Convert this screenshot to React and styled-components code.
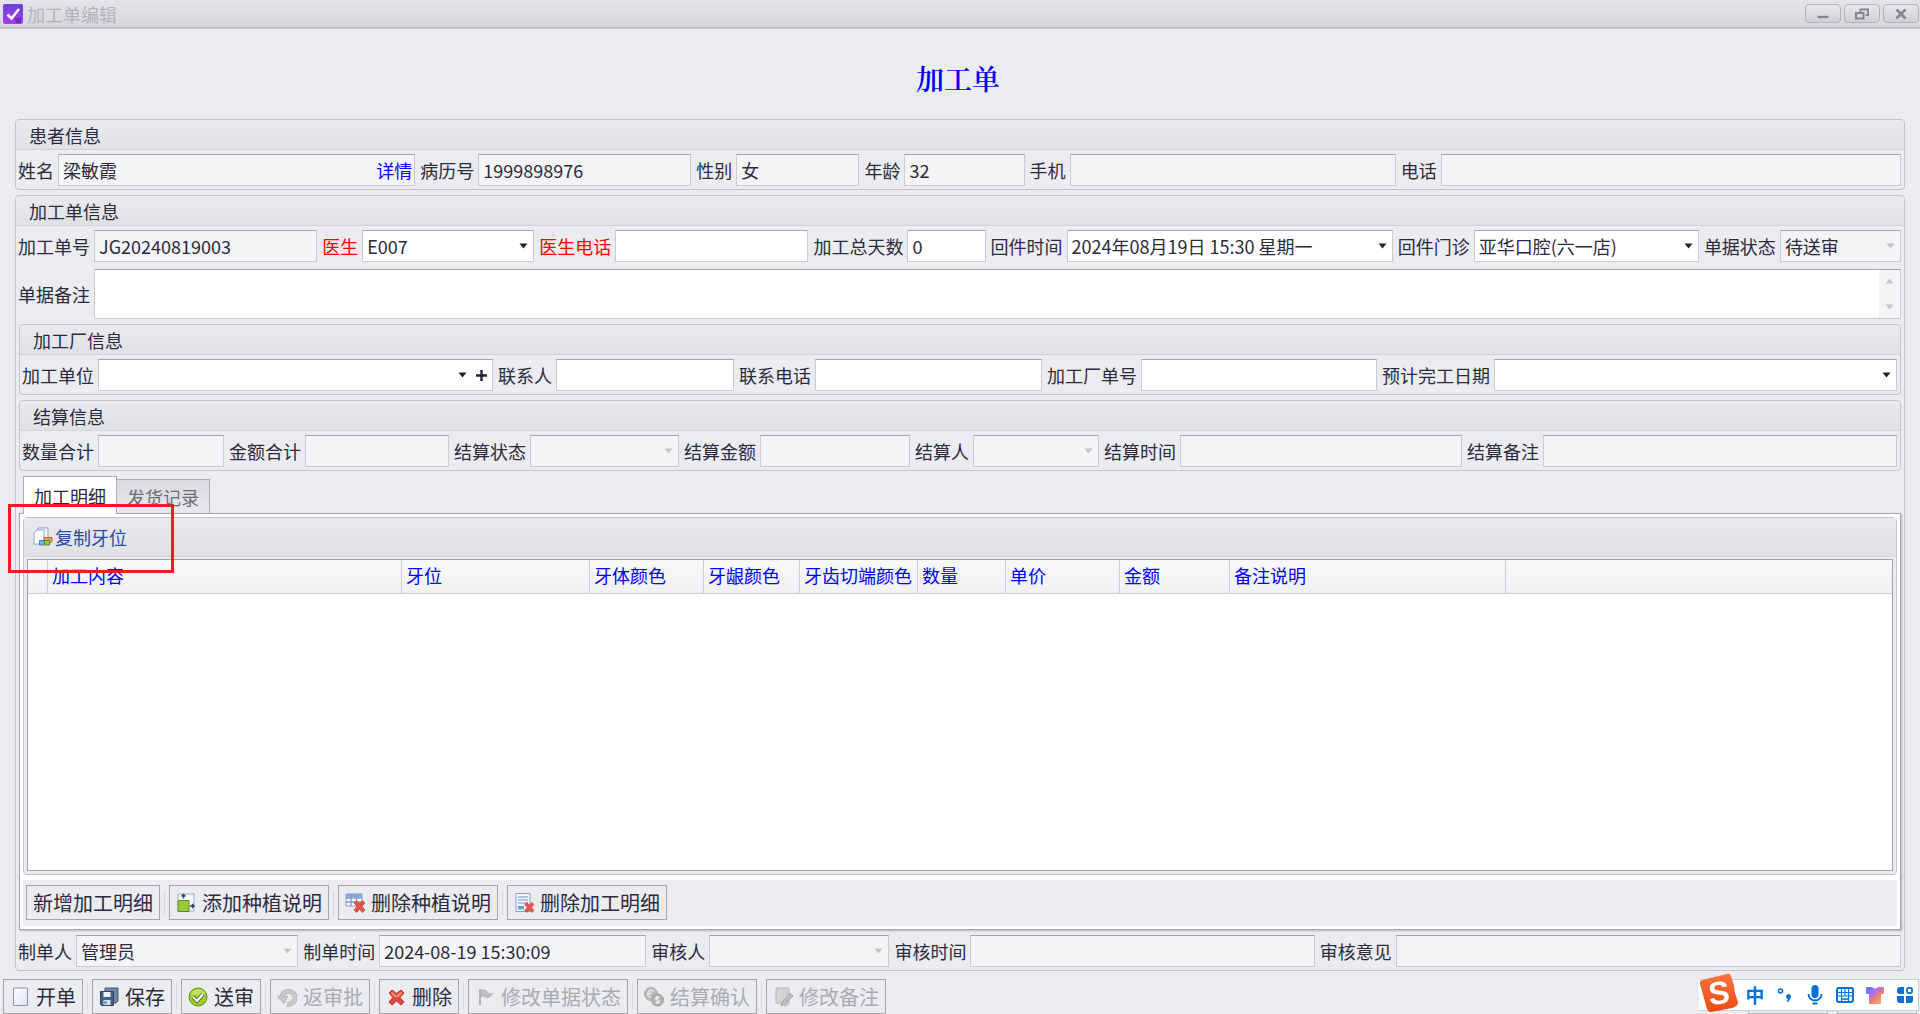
import { useId } from "react"
import styled, { createGlobalStyle, css } from "styled-components"

const GlobalStyle = createGlobalStyle`
  * {
    box-sizing: border-box;
  }
  body {
    margin: 0;
    background: #ebecef;
    color: #2b2b3f;
    font-size: 18px;
    line-height: 24px;
  }
  body, button, input, select, textarea {
    font-family: "Noto Sans CJK SC", "Open Sans", sans-serif;
  }
`
const Page = styled.div`
  display: flex;
  flex-direction: column;
  min-height: 100vh;
`
const TitleBar = styled.header`
  display: flex;
  align-items: center;
  gap: 4px;
  height: 29px;
  padding: 0 1px 0 3px;
  color: #b2b3bd;
  background: linear-gradient(#e3e4e8, #d6d7dc);
  border-bottom: 2px solid #c0c0ca;
`
const TitleText = styled.span`
  flex: 1;
`
const WindowButtons = styled.div`
  display: flex;
  gap: 3px;
`
const WindowButton = styled.button`
  display: flex;
  align-items: center;
  justify-content: center;
  width: 36px;
  height: 19px;
  padding: 0;
  background: linear-gradient(#e6e7ea, #d0d1d7);
  border: 1px solid #b2b3bc;
  border-radius: 4px;
`
const Heading = styled.h1`
  margin: 0;
  padding: 33px 4px 25px 0;
  color: #0000ff;
  font-family: "Noto Serif CJK SC", "Noto Sans CJK SC", serif;
  font-size: 28px;
  font-weight: 600;
  line-height: 32px;
  text-align: center;
`
const Form = styled.main`
  display: flex;
  flex-direction: column;
  flex: 1;
  gap: 5px;
  padding: 0 15px;
`
const Group = styled.section`
  display: flex;
  flex-direction: column;
  flex: ${props => (props.$fill ? "1" : "none")};
  border: 1px solid #c3c4cb;
  border-radius: 4px;
`
const GroupTitle = styled.h2`
  margin: 0;
  padding: 3px 13px 2px;
  font-size: 18px;
  font-weight: 400;
  line-height: 24px;
  background: linear-gradient(#e9eaed, #e0e1e5);
  border-bottom: 1px solid #d3d4d9;
  border-radius: 3px 3px 0 0;
`
const Row = styled.div`
  display: flex;
  padding: ${props => (props.$last ? "5px 3px 3px 0" : "4px 3px 3px 0")};
`
const Nested = styled.div`
  display: flex;
  flex-direction: column;
  flex: 1;
  gap: 5px;
  padding: 2px 3px 0;
`
const FieldItem = styled.div`
  display: flex;
  align-items: center;
  flex: ${props => props.$grow} 1 0;
  min-width: 0;
  &:first-child > label {
    padding-left: 2px;
  }
`
const FieldLabel = styled.label`
  flex: none;
  padding: 0 4px 0 5px;
  color: ${props => (props.$required ? "#ff0000" : "inherit")};
  white-space: nowrap;
`
const FieldBox = styled.div`
  display: flex;
  align-items: center;
  flex: 1;
  min-width: 0;
  height: ${props => (props.$tall ? "50px" : "32px")};
  color: ${props => (props.$locked ? "#c3c4ca" : "#222236")};
  background: ${props => (props.$locked ? "#f4f4f6" : "#fff")};
  border: 1px solid #cbccd3;
  border-top-color: #a3a4ae;
`
const controlStyle = css`
  flex: 1;
  min-width: 0;
  height: 100%;
  padding: 0 4px;
  color: #2b2b3f;
  font-size: 18px;
  line-height: 24px;
  background: transparent;
  border: 0;
  border-radius: 0;
  outline: none;
  opacity: 1;
`
const TextInput = styled.input`
  ${controlStyle}
`
const SelectInput = styled.select`
  ${controlStyle}
  appearance: none;
`
const NoteInput = styled.textarea`
  ${controlStyle}
  resize: none;
  overflow: hidden;
`
const ArrowIcon = styled.svg`
  flex: none;
  width: 9px;
  height: 6px;
  margin-right: 5px;
  fill: currentColor;
  pointer-events: none;
`
const AddButton = styled.button`
  display: flex;
  flex: none;
  padding: 0;
  margin: 0 5px 0 4px;
  background: none;
  border: 0;
`
const DetailLink = styled.a`
  flex: none;
  padding-right: 2px;
  color: #0000ff;
  text-decoration: none;
`
const ScrollTrack = styled.div`
  display: flex;
  flex-direction: column;
  align-items: center;
  justify-content: space-between;
  width: 21px;
  height: 100%;
  padding: 8px 0 8px 5px;
  color: #c8c9cf;
  background: #f4f4f6;
`
const TabArea = styled.div`
  display: flex;
  flex-direction: column;
  flex: 1;
`
const TabList = styled.div`
  display: flex;
  align-items: flex-end;
  padding-left: 4px;
`
const Tab = styled.button`
  position: relative;
  z-index: ${props => (props.$active ? 1 : 0)};
  height: ${props => (props.$active ? "38px" : "34px")};
  margin-bottom: ${props => (props.$active ? "-1px" : "0")};
  padding: 0 10px;
  color: ${props => (props.$active ? "#2b2b3f" : "#6c6c7a")};
  font-size: 18px;
  line-height: 24px;
  background: ${props => (props.$active ? "#fff" : "linear-gradient(#d9dade, #e8e9ec)")};
  border: 1px solid #acadb6;
  border-bottom: 0;
  & + & {
    border-left: 0;
  }
`
const Pane = styled.div`
  position: relative;
  display: flex;
  flex-direction: column;
  flex: 1;
  padding: 3px;
  background: #fff;
  border: 1px solid #a3a4ae;
  box-shadow: 1px 1px 2px #b4b5bc;
`
const GridPanel = styled.div`
  display: flex;
  flex-direction: column;
  flex: 1;
  padding: 0 3px 3px;
  background: #ebecef;
  border: 1px solid #c3c4cb;
  border-radius: 4px;
`
const PanelBar = styled.div`
  margin: 0 -3px 2px;
  padding: 4px 9px;
  background: linear-gradient(#e8e9ec, #e0e1e5);
  border-bottom: 1px solid #d3d4d9;
`
const CopyButton = styled.button`
  display: flex;
  align-items: center;
  gap: 2px;
  height: 30px;
  padding: 0;
  color: #2a4a9f;
  font-size: 18px;
  line-height: 24px;
  background: none;
  border: 0;
`
const GridBox = styled.div`
  flex: 1;
  background: #fff;
  border: 1px solid #a3a4ae;
`
const DetailTable = styled.table`
  width: 100%;
  table-layout: fixed;
  border-collapse: separate;
  border-spacing: 0;
`
const HeadCell = styled.th`
  width: ${props => (props.$width ? `${props.$width}px` : "auto")};
  height: 34px;
  padding: 0 0 3px 4px;
  color: #0000ff;
  font-weight: 400;
  text-align: left;
  white-space: nowrap;
  background: linear-gradient(#f8f8f9, #f0f1f3);
  border-right: 1px solid #cdced4;
  border-bottom: 1px solid #cdced4;
  &:last-child {
    border-right: 0;
  }
`
const Toolbar = styled.div`
  display: flex;
  align-items: center;
  padding: ${props => (props.$bottom ? "0 3px" : "5px 3px 6px")};
  margin-top: ${props => (props.$bottom ? "8px" : "5px")};
  background: #ebecef;
`
const ToolButton = styled.button`
  display: flex;
  align-items: center;
  gap: 6px;
  height: 35px;
  padding: 0 6px;
  color: #2b2b3f;
  font-size: 20px;
  line-height: 24px;
  white-space: nowrap;
  background: #ebecef;
  border: 1px solid #a6a6a8;
  &:disabled {
    color: #a9aab5;
  }
`
const Separator = styled.span`
  width: 1px;
  height: 24px;
  margin: 0 4px;
  background: #d5d6da;
`
const Spacer = styled.span`
  flex: 1;
`
const CoveredButton = styled.span`
  width: 80px;
  height: 35px;
  margin-left: 9px;
  border: 1px solid #b4b5ba;
`
const HighlightBox = styled.div`
  position: absolute;
  z-index: 2;
  top: -10px;
  left: -12px;
  width: 166px;
  height: 69px;
  border: 3px solid #f01c24;
  pointer-events: none;
`
const ImeBar = styled.div`
  position: fixed;
  right: 1px;
  bottom: 3px;
  display: flex;
  align-items: center;
  gap: 10px;
  height: 32px;
  padding-right: 3px;
  background: #fff;
  border: 1px solid #c2d3e8;
  border-left: 0;
`
const ImeLogo = styled.svg`
  width: 40px;
  height: 40px;
  margin: 0 -4px 4px 0;
  overflow: visible;
`
const ImeButton = styled.button`
  display: flex;
  align-items: center;
  justify-content: center;
  width: 20px;
  padding: 0;
  color: #0071dc;
  font-size: 19px;
  font-weight: 700;
  line-height: 24px;
  background: none;
  border: 0;
`

function Arrow({ up }) {
  return (
    <ArrowIcon viewBox="0 0 9 6">
      <path d={up ? "M.5 5.500h8L4.500 .5z" : "M.5 .5h8L4.500 5.500z"} />
    </ArrowIcon>
  )
}

function Field({ label, grow, value = "", locked, required, select, children }) {
  const id = useId()
  return (
    <FieldItem $grow={grow}>
      <FieldLabel htmlFor={id} $required={required}>{label}</FieldLabel>
      <FieldBox $locked={locked}>
        {select ? (
          <>
            <SelectInput id={id} defaultValue={value} disabled={locked}>
              <option>{value}</option>
            </SelectInput>
            <Arrow />
          </>
        ) : (
          <TextInput id={id} defaultValue={value} readOnly={locked} />
        )}
        {children}
      </FieldBox>
    </FieldItem>
  )
}

function AppIcon() {
  return (
    <svg width="20" height="20" viewBox="0 0 20 20">
      <defs>
        <linearGradient id="appFill" x1="0" y1="0" x2="0" y2="1">
          <stop offset="0" stopColor="#6b3fd6" />
          <stop offset="1" stopColor="#a63df0" />
        </linearGradient>
      </defs>
      <rect width="20" height="20" rx="2" fill="url(#appFill)" />
      <path d="M12 14l6-1v6h-5z" fill="#7029c9" />
      <path d="M4.500 10.500l4 4L16 5" fill="none" stroke="#fff" strokeWidth="2.500" />
    </svg>
  )
}

function CopyIcon() {
  return (
    <svg width="20" height="20" viewBox="0 0 20 20">
      <path d="M5 1h10v13H5z" fill="#f4f7fd" stroke="#8fa3d3" />
      <path d="M1 6l3-3h7v14H1z" fill="#fff" stroke="#8fa3d3" />
      <path d="M11 10.500h8v4l-2 1.500h-6z" fill="#f0a04a" stroke="#a9561c" strokeWidth=".8" />
      <path d="M6.500 13.500h5V18h-5z" fill="#6cb8ea" stroke="#2c6aa8" strokeWidth=".8" />
      <path d="M11.500 13.500h5V18h-5z" fill="#9ac73c" stroke="#4d7a12" strokeWidth=".8" />
    </svg>
  )
}

function AddPlantIcon() {
  return (
    <svg width="20" height="20" viewBox="0 0 20 20">
      <path d="M2 1h16v17H2z" fill="#f7f9fd" stroke="#93a5cf" />
      <path d="M2 7.500h11v11H2z" fill="#9cc83f" stroke="#5e8d1c" />
      <path d="M7.500 1.500v4M5.500 3.500l2-2 2 2M14 13h4M16 11l2 2-2 2" fill="none" stroke="#33415f" strokeWidth="1.400" />
    </svg>
  )
}

function RemoveMark() {
  return (
    <path d="M9 10l2.500-2.500L14.500 10.500l3-3L20 10l-3 3.500 3 3.500-2.500 2.500-3-3-3 3L9 17l3-3.500z" fill="#e2574a" stroke="#b8332b" strokeWidth=".6" />
  )
}

function DeletePlantIcon() {
  return (
    <svg width="20" height="20" viewBox="0 0 20 20">
      <path d="M1 1h16v12H1z" fill="#fff" stroke="#7f98cf" />
      <path d="M1 1h16v3H1z" fill="#8aa7dc" />
      <path d="M1 5h16M1 9h16M6 1v12M11.500 1v12" stroke="#7f98cf" strokeWidth="1.300" />
      <RemoveMark />
    </svg>
  )
}

function DeleteDetailIcon() {
  return (
    <svg width="20" height="20" viewBox="0 0 20 20">
      <path d="M2 .5h14v18H2z" fill="#f2f5fc" stroke="#8f9fd0" />
      <path d="M4 4h10M4 7h10M4 10h10" stroke="#9eb2dc" strokeWidth="1.300" />
      <path d="M4 13h6v3.500H4z" fill="#58a9df" />
      <g transform="translate(3 3) scale(.85)">
        <RemoveMark />
      </g>
    </svg>
  )
}

function NewIcon() {
  return (
    <svg width="20" height="20" viewBox="0 0 20 20">
      <defs>
        <linearGradient id="paper" x1="0" y1="0" x2="1" y2="1">
          <stop offset="0" stopColor="#fff" />
          <stop offset="1" stopColor="#dbe4f6" />
        </linearGradient>
      </defs>
      <path d="M3.500 1h14v17.500h-14z" fill="url(#paper)" stroke="#7f8fc4" />
    </svg>
  )
}

function SaveIcon() {
  return (
    <svg width="20" height="20" viewBox="0 0 20 20">
      <path d="M6 1h13v13l-2 2H6z" fill="#7085a4" stroke="#4a5872" />
      <path d="M1.500 4.500h13v14h-12l-1-1z" fill="#465f88" stroke="#33425e" />
      <path d="M4.500 5h7v5h-7z" fill="#eef3fa" />
      <path d="M4.500 13h7v5h-7z" fill="#dce4ef" />
      <path d="M5 14h3v3H5z" fill="#5ab3e6" />
    </svg>
  )
}

function ApproveIcon() {
  return (
    <svg width="20" height="20" viewBox="0 0 20 20">
      <circle cx="10" cy="10" r="9" fill="#9bcd2f" stroke="#5d8e16" />
      <path d="M3 7a7.500 7.500 0 0 1 14 0q-7 3-14 0z" fill="#bfe263" />
      <path d="M5 10l4 4 6-7" fill="none" stroke="#4c7415" strokeWidth="4" />
      <path d="M5 10l4 4 6-7" fill="none" stroke="#fff" strokeWidth="2.200" />
    </svg>
  )
}

function ReturnIcon() {
  return (
    <svg width="20" height="20" viewBox="0 0 20 20">
      <path d="M5 11a6.500 6.500 0 1 1 5 6" fill="none" stroke="#b0b0b0" strokeWidth="5" />
      <path d="M5 11a6.500 6.500 0 1 1 5 6" fill="none" stroke="#c9c9c9" strokeWidth="3.400" />
      <path d="M0 9h11l-4 8z" fill="#c4c4c4" stroke="#b0b0b0" strokeWidth=".6" />
    </svg>
  )
}

function DeleteIcon() {
  return (
    <svg width="20" height="20" viewBox="0 0 20 20">
      <path d="M3 6l3-3 4.500 3.500L15 3l3 3-4 4.500 4 4.500-3 3-4.500-4L6 18l-3-3 4-4.500z" fill="#de4c3e" stroke="#b52f27" strokeLinejoin="round" />
      <path d="M4.500 6L6 4.500l4.500 4 4.500-4L16.500 6l-4 4h-4z" fill="#f08a78" />
    </svg>
  )
}

function FlagIcon() {
  return (
    <svg width="20" height="20" viewBox="0 0 20 20">
      <path d="M4 2h2v16H4z" fill="#b5b5b5" />
      <path d="M6 3q4-1 6 1v2q3 1 6 0l-3 4q-4 2-6-1l-3 1z" fill="#bfbfbf" stroke="#b0b0b0" strokeWidth=".6" />
    </svg>
  )
}

function CoinsIcon() {
  return (
    <svg width="20" height="20" viewBox="0 0 20 20">
      <circle cx="7" cy="7" r="6.500" fill="#bdbdbd" stroke="#a9a9a9" />
      <path d="M10 4.500a3.500 3.500 0 1 0 0 5M3 6.500h5" fill="none" stroke="#e4e4e4" strokeWidth="1.300" />
      <circle cx="13.500" cy="13" r="6" fill="#b3b3b3" stroke="#9e9e9e" />
      <path d="M15.500 11q-2-1.500-3.500-.3t1.500 2.300 1.500 2.300-3.500-.3M13.500 9v8" fill="none" stroke="#eee" strokeWidth="1.200" />
    </svg>
  )
}

function EditNoteIcon() {
  return (
    <svg width="20" height="20" viewBox="0 0 20 20">
      <path d="M3 1h13v16l-4 2-2-3H3z" fill="#d3d3d5" stroke="#b6b6b8" />
      <path d="M9 15l8-9 3 3-8 8-4 2z" fill="#bdbdbd" stroke="#a5a5a5" />
    </svg>
  )
}

const columns = [
  { title: "", width: 20 },
  { title: "加工内容", width: 354 },
  { title: "牙位", width: 188 },
  { title: "牙体颜色", width: 114 },
  { title: "牙龈颜色", width: 96 },
  { title: "牙齿切端颜色", width: 118 },
  { title: "数量", width: 88 },
  { title: "单价", width: 114 },
  { title: "金额", width: 110 },
  { title: "备注说明", width: 276 },
  { title: "" },
]

const detailActions = [
  { text: "新增加工明细" },
  { text: "添加种植说明", Icon: AddPlantIcon },
  { text: "删除种植说明", Icon: DeletePlantIcon },
  { text: "删除加工明细", Icon: DeleteDetailIcon },
]

const orderActions = [
  { text: "开单", Icon: NewIcon },
  { text: "保存", Icon: SaveIcon },
  { text: "送审", Icon: ApproveIcon },
  { text: "返审批", Icon: ReturnIcon, disabled: true },
  { text: "删除", Icon: DeleteIcon },
  { text: "修改单据状态", Icon: FlagIcon, disabled: true },
  { text: "结算确认", Icon: CoinsIcon, disabled: true },
  { text: "修改备注", Icon: EditNoteIcon, disabled: true },
]

function Actions({ items }) {
  return items.map(({ text, Icon, disabled }, i) => [
    i > 0 && <Separator key={`${text}-line`} />,
    <ToolButton key={text} disabled={disabled}>
      {Icon && <Icon />}
      {text}
    </ToolButton>,
  ])
}

function InputMethodBar() {
  return (
    <ImeBar>
      <ImeLogo viewBox="0 0 40 40">
        <defs>
          <linearGradient id="logoFill" x1="0" y1="0" x2="0" y2="1">
            <stop offset="0" stopColor="#fb7440" />
            <stop offset="1" stopColor="#ee4a10" />
          </linearGradient>
        </defs>
        <path d="M3 7L28 1q3-1 4 2l2 6q1 3 2 11l3 9q0 3-2 4-4 3-9 3l-16 3q-3 0-4-3L1 11q-1-3 2-4z" fill="url(#logoFill)" />
        <text x="20" y="31" transform="rotate(-6 20 20)" textAnchor="middle" fontFamily="Liberation Sans, sans-serif" fontSize="32" fontWeight="700" fill="#fff">S</text>
      </ImeLogo>
      <ImeButton>中</ImeButton>
      <ImeButton>
        <svg width="16" height="16" viewBox="0 0 16 16">
          <circle cx="3.500" cy="4" r="2" fill="none" stroke="#0071dc" strokeWidth="1.600" />
          <path d="M9 9.500a2.500 2.500 0 1 1 4.500 1.500q-.5 3-3.500 4l-.5-1q1.500-.7 1.500-2-2-.5-2-2.500z" fill="#0071dc" />
        </svg>
      </ImeButton>
      <ImeButton>
        <svg width="16" height="20" viewBox="0 0 16 20">
          <rect x="4.500" y="0" width="7" height="13" rx="3.500" fill="#0071dc" />
          <path d="M1.500 9a6.500 6.500 0 0 0 13 0" fill="none" stroke="#0071dc" strokeWidth="1.800" />
          <path d="M5.500 18.500h5" stroke="#0071dc" strokeWidth="2" />
        </svg>
      </ImeButton>
      <ImeButton>
        <svg width="18" height="16" viewBox="0 0 18 16" fill="none" stroke="#0071dc">
          <rect x="1" y="1" width="16" height="14" rx="2" strokeWidth="2" />
          <path d="M2 5.500h14M2 9h14M5.500 2v7M9 2v7M12.500 2v7M5.500 9v5M12.500 9v5" strokeWidth="1.200" />
          <path d="M5 12h8" strokeWidth="1.600" />
        </svg>
      </ImeButton>
      <ImeButton>
        <svg width="18" height="18" viewBox="0 0 18 18">
          <defs>
            <linearGradient id="shirt" x1="0" y1="0" x2="1" y2="1">
              <stop offset=".1" stopColor="#6a74ff" />
              <stop offset=".4" stopColor="#b070ee" />
              <stop offset=".6" stopColor="#f57f66" />
              <stop offset="1" stopColor="#ffb98c" />
            </linearGradient>
          </defs>
          <path d="M1 1h5q3 3 6 0h5q1 0 1 1v5q0 1-1 1h-2v9q0 1-1 1H4q-1 0-1-1V8H1Q0 8 0 7V2q0-1 1-1z" fill="url(#shirt)" />
        </svg>
      </ImeButton>
      <ImeButton>
        <svg width="16" height="16" viewBox="0 0 16 16" fill="#0071dc">
          <path d="M3 0h4v7H3a3 3 0 0 1-3-3V3a3 3 0 0 1 3-3zM0 9h7v7H3a3 3 0 0 1-3-3zM9 9h7v4a3 3 0 0 1-3 3H9z" />
          <rect x="10" y="1" width="5" height="5" rx="1.500" fill="none" stroke="#0071dc" strokeWidth="1.800" />
        </svg>
      </ImeButton>
    </ImeBar>
  )
}

export default function App() {
  return (
    <Page>
      <GlobalStyle />
      <TitleBar>
        <AppIcon />
        <TitleText>加工单编辑</TitleText>
        <WindowButtons>
          <WindowButton>
            <svg width="14" height="12" viewBox="0 0 14 12">
              <path d="M1.500 9h11" stroke="#858693" strokeWidth="2.400" />
            </svg>
          </WindowButton>
          <WindowButton>
            <svg width="14" height="12" viewBox="0 0 14 12" fill="none" stroke="#858693" strokeWidth="2">
              <path d="M5.500 4V1.500H13V7H10.500M1 5h7.500v5.500H1z" />
            </svg>
          </WindowButton>
          <WindowButton>
            <svg width="14" height="12" viewBox="0 0 14 12">
              <path d="M2.500 1.500l9 9M11.500 1.500l-9 9" stroke="#858693" strokeWidth="2.800" />
            </svg>
          </WindowButton>
        </WindowButtons>
      </TitleBar>
      <Heading>加工单</Heading>
      <Form>
        <Group>
          <GroupTitle>患者信息</GroupTitle>
          <Row>
            <Field label="姓名" grow={399} value="梁敏霞" locked>
              <DetailLink href="#detail">详情</DetailLink>
            </Field>
            <Field label="病历号" grow={276} value="1999898976" locked />
            <Field label="性别" grow={168} value="女" locked />
            <Field label="年龄" grow={165} value="32" locked />
            <Field label="手机" grow={371} locked />
            <Field label="电话" grow={505} locked />
          </Row>
        </Group>
        <Group $fill>
          <GroupTitle>加工单信息</GroupTitle>
          <Row>
            <Field label="加工单号" grow={301} value="JG20240819003" locked />
            <Field label="医生" grow={217} value="E007" required select />
            <Field label="医生电话" grow={274} required />
            <Field label="加工总天数" grow={177} value="0" />
            <Field label="回件时间" grow={407} value="2024年08月19日 15:30 星期一" select />
            <Field label="回件门诊" grow={306} value="亚华口腔(六一店)" select />
            <Field label="单据状态" grow={202} value="待送审" locked select />
          </Row>
          <Row>
            <FieldItem $grow={1}>
              <FieldLabel htmlFor="orderNote">单据备注</FieldLabel>
              <FieldBox $tall>
                <NoteInput id="orderNote" />
                <ScrollTrack>
                  <Arrow up />
                  <Arrow />
                </ScrollTrack>
              </FieldBox>
            </FieldItem>
          </Row>
          <Nested>
            <Group>
              <GroupTitle>加工厂信息</GroupTitle>
              <Row>
                <Field label="加工单位" grow={473} select>
                  <AddButton>
                    <svg width="11" height="11" viewBox="0 0 11 11">
                      <path d="M5.500 0v11M0 5.500h11" stroke="#222236" strokeWidth="2.400" />
                    </svg>
                  </AddButton>
                </Field>
                <Field label="联系人" grow={241} />
                <Field label="联系电话" grow={308} />
                <Field label="加工厂单号" grow={335} />
                <Field label="预计完工日期" grow={520} select />
              </Row>
            </Group>
            <Group>
              <GroupTitle>结算信息</GroupTitle>
              <Row>
                <Field label="数量合计" grow={204} locked />
                <Field label="金额合计" grow={225} locked />
                <Field label="结算状态" grow={230} locked select />
                <Field label="结算金额" grow={231} locked />
                <Field label="结算人" grow={189} locked select />
                <Field label="结算时间" grow={363} locked />
                <Field label="结算备注" grow={435} locked />
              </Row>
            </Group>
            <TabArea>
              <TabList role="tablist">
                <Tab role="tab" aria-selected="true" $active>加工明细</Tab>
                <Tab role="tab" aria-selected="false">发货记录</Tab>
              </TabList>
              <Pane role="tabpanel">
                <GridPanel>
                  <PanelBar>
                    <CopyButton>
                      <CopyIcon />
                      复制牙位
                    </CopyButton>
                  </PanelBar>
                  <GridBox>
                    <DetailTable>
                      <thead>
                        <tr>
                          {columns.map((column, i) => (
                            <HeadCell key={i} $width={column.width}>{column.title}</HeadCell>
                          ))}
                        </tr>
                      </thead>
                    </DetailTable>
                  </GridBox>
                </GridPanel>
                <Toolbar>
                  <Actions items={detailActions} />
                </Toolbar>
                <HighlightBox />
              </Pane>
            </TabArea>
          </Nested>
          <Row $last>
            <Field label="制单人" grow={282} value="管理员" locked select />
            <Field label="制单时间" grow={348} value="2024-08-19 15:30:09" locked />
            <Field label="审核人" grow={243} locked select />
            <Field label="审核时间" grow={425} locked />
            <Field label="审核意见" grow={586} locked />
          </Row>
        </Group>
      </Form>
      <Toolbar $bottom>
        <Actions items={orderActions} />
        <Spacer />
        <CoveredButton />
        <CoveredButton />
      </Toolbar>
      <InputMethodBar />
    </Page>
  )
}
